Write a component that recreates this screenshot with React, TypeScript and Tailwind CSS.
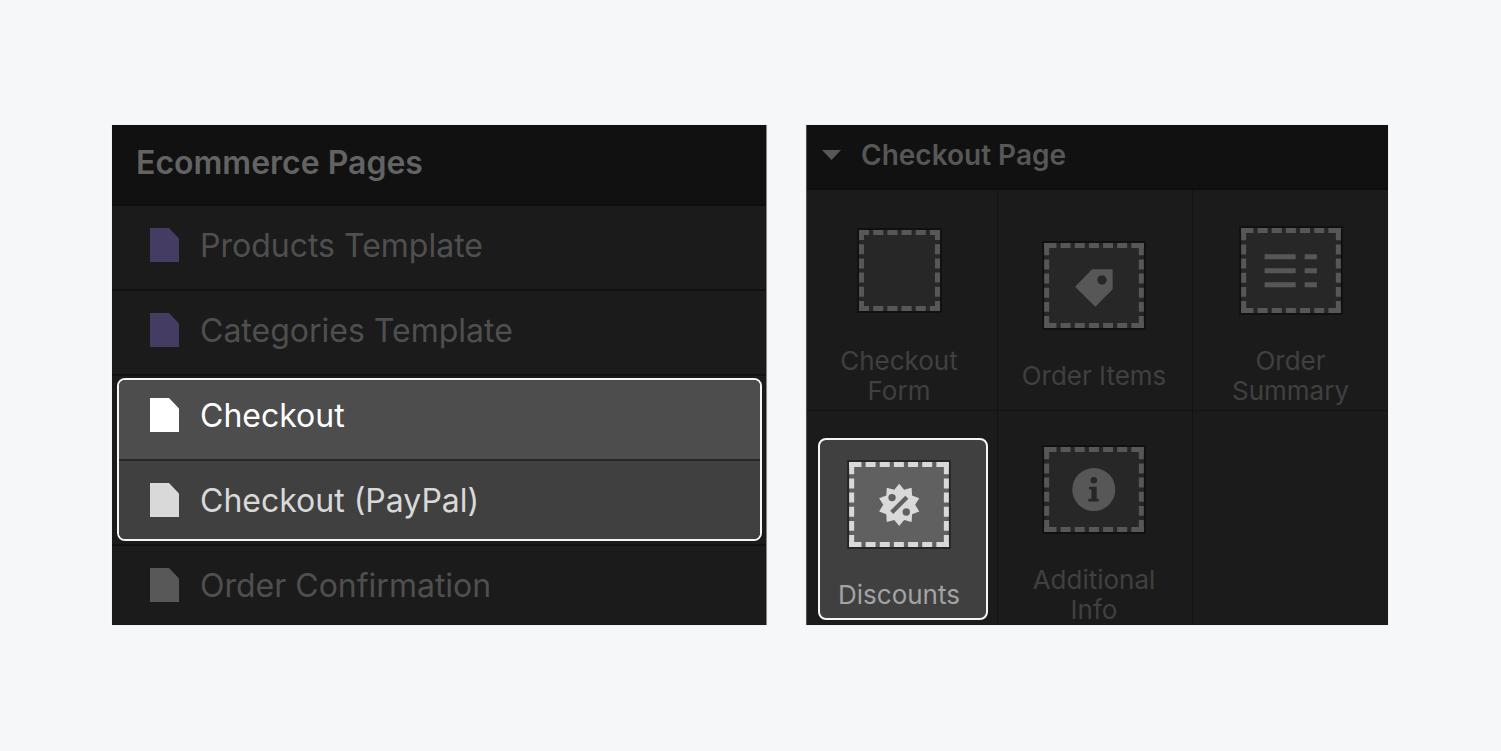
import type { ReactNode } from "react";

type Page = { name: string; icon: string; text: string };

const templates: Page[] = [
  { name: "Products Template", icon: "text-[#453c63]", text: "text-[#4f4f4f]" },
  { name: "Categories Template", icon: "text-[#453c63]", text: "text-[#4f4f4f]" },
];

const checkouts: Page[] = [
  { name: "Checkout", icon: "text-white", text: "text-white" },
  { name: "Checkout (PayPal)", icon: "text-[#d9d9d9]", text: "text-[#d9d9d9]" },
];

const confirmation: Page = { name: "Order Confirmation", icon: "text-[#585858]", text: "text-[#4f4f4f]" };

function PageRow({ page, divider }: { page: Page; divider: string }) {
  return (
    <li className={`relative border-b-2 ${divider}`}>
      <a href="#" className="flex items-center gap-[21px] pt-[22px] pr-6 pb-[27px] pl-[38px]">
        <svg viewBox="0 0 29 34" className={`h-[34px] w-[29px] shrink-0 ${page.icon}`} fill="currentColor" aria-hidden="true">
          <path d="M0 0H19L29 10.5V34H0Z" />
        </svg>
        <span className={`pt-0.5 text-[32px] leading-8 whitespace-nowrap ${page.text}`}>{page.name}</span>
      </a>
    </li>
  );
}

function Frame({ small, active, children }: { small?: boolean; active?: boolean; children?: ReactNode }) {
  const w = small ? 84.5 : 104;
  const h = small ? 84.5 : 89.3;
  const iw = w - 4;
  const ih = h - 4;
  const across = small ? "10 4.1" : "12.3 4.2 10 4.2 10 4.2 10 4.2 10 4.2 10 4.2 12.5 50";
  const down = small ? "10 4.1" : "12.3 4.2 10 4.2 10 4.2 10 4.2 10 4.2 12 50";
  const ink = active ? "#d9d9d9" : "#575757";
  const paper = active ? "#606060" : "#272727";
  const edge = active ? "#262626" : "#111111";
  return (
    <span className="flex h-[89px] items-center">
      <svg viewBox={`0 0 ${w} ${h}`} width={Math.round(w)} height={Math.round(h)} className="shrink-0" aria-hidden="true" style={{ color: ink }}>
        <rect width={w} height={h} fill={edge} />
        <rect x="2" y="2" width={iw} height={ih} fill={paper} />
        <g stroke={ink} strokeWidth="5">
          <path d={`M2 4.5h${iw}`} strokeDasharray={across} />
          <path d={`M2 ${h - 4.5}h${iw}`} strokeDasharray={across} />
          <path d={`M4.5 2v${ih}`} strokeDasharray={down} />
          <path d={`M${w - 4.5} 2v${ih}`} strokeDasharray={down} />
        </g>
        {children}
      </svg>
    </span>
  );
}

const burst = Array.from({ length: 20 }, (_, i) => {
  const r = i % 2 ? 16 : 21.2;
  const a = (i * Math.PI) / 10;
  return `${(52.2 + r * Math.sin(a)).toFixed(2)},${(45 - r * Math.cos(a)).toFixed(2)}`;
}).join(" ");

function Tile({ label, cell, text, frame, highlighted }: { label: string; cell: string; text: string; frame: ReactNode; highlighted?: boolean }) {
  return (
    <li className={`relative h-[221px] border-[#131313] ${cell}`}>
      {highlighted && <span className="absolute top-[27px] right-[9px] left-[11px] h-[182px] rounded-lg border-2 border-[#f5f5f5] bg-[#404040]" />}
      <button type="button" className="relative flex h-full w-full flex-col items-center justify-center gap-[31px]">
        {frame}
        <span className={`max-w-[150px] text-[26px] leading-[30px] ${text}`}>{label}</span>
      </button>
    </li>
  );
}

export default function App() {
  return (
    <main className="grid min-h-screen grid-cols-[655fr_582fr] items-start gap-[39px] bg-[#f6f7f9] py-[125px] pr-[113px] pl-28 font-['Inter',sans-serif] [font-optical-sizing:none]">
      <section className="h-[500px] overflow-hidden border-r border-[#8a8a8a] bg-[#1b1b1b] shadow-[0_0_0_1px_#f1f1f1]">
        <h2 className="border-b-2 border-[#0e0e0e] bg-[#111111] pt-5 pb-[23px] pl-6 text-[32px] leading-9 font-semibold text-[#636363]">Ecommerce Pages</h2>
        <ul>
          {templates.map((p) => (
            <PageRow key={p.name} page={p} divider="border-[#111111]" />
          ))}
          <li className="relative">
            <div className="absolute top-[2px] right-1 bottom-[5px] left-[5px] flex flex-col overflow-hidden rounded-lg border-2 border-[#f5f5f5]">
              <span className="h-[79px] bg-[#4d4d4d]" />
              <span className="h-[2px] bg-[#272727]" />
              <span className="grow bg-[#404040]" />
            </div>
            <ul>
              {checkouts.map((p, i) => (
                <PageRow key={p.name} page={p} divider={i === 0 ? "border-transparent" : "border-[#111111]"} />
              ))}
            </ul>
          </li>
          <PageRow page={confirmation} divider="border-[#111111]" />
        </ul>
      </section>

      <section className="h-[500px] overflow-hidden border-l border-[#555555] bg-[#1b1b1b] shadow-[0_0_0_1px_#f1f1f1]">
        <h2 className="border-b-2 border-[#0e0e0e] bg-[#111111]">
          <button type="button" className="flex w-full items-center gap-5 pt-3 pb-[15px] pl-[15px] text-[28px] leading-9 font-semibold text-[#575757]">
            <svg viewBox="0 0 19 10" className="h-[10px] w-[19px]" fill="currentColor" aria-hidden="true">
              <path d="M0 0H19L9.5 10Z" />
            </svg>
            Checkout Page
          </button>
        </h2>
        <ul className="grid grid-cols-[191fr_195fr_195fr]">
          <Tile label="Checkout Form" cell="border-r border-b pt-8 pr-1.5" text="text-[#404040]" frame={<Frame small />} />
          <Tile
            label="Order Items"
            cell="border-r border-b pt-8 pr-0.5"
            text="text-[#404040]"
            frame={
              <Frame>
                <path fill="currentColor" fillRule="evenodd" d="M50.2 28.3H70.7V48.5L53.3 66L33 46ZM60 34.3a4.7 4.7 0 1 0 .01 0Z" />
              </Frame>
            }
          />
          <Tile
            label="Order Summary"
            cell="border-b pt-8"
            text="text-[#404040]"
            frame={
              <Frame>
                <path stroke="currentColor" strokeWidth="5" d="M25.5 30.8H56.7M65.7 30.8H78M25.5 44.9H56.7M65.7 44.9H78M25.5 59H56.7M65.7 59H78" />
              </Frame>
            }
          />
          <Tile
            label="Discounts"
            cell="border-r pt-[26px] pr-1.5"
            text="text-[#a3a3a3]"
            highlighted
            frame={
              <Frame active>
                <polygon points={burst} fill="currentColor" />
                <g fill="#606060">
                  <circle cx="45" cy="37.7" r="3.7" />
                  <circle cx="59.3" cy="52.2" r="3.7" />
                </g>
                <path d="M44.7 52.6L59.9 37.4" stroke="#606060" strokeWidth="4.4" />
              </Frame>
            }
          />
          <Tile
            label="Additional Info"
            cell="border-r pt-[26px] pr-0.5"
            text="text-[#404040]"
            frame={
              <Frame>
                <circle cx="51.8" cy="44.7" r="21.6" fill="currentColor" />
                <circle cx="51.8" cy="35.3" r="3.3" fill="#272727" />
                <path fill="#272727" d="M47 42H54.7V54H56.7V56.8H46.3V54H49.4V44.7H47Z" />
              </Frame>
            }
          />
        </ul>
      </section>
    </main>
  );
}
